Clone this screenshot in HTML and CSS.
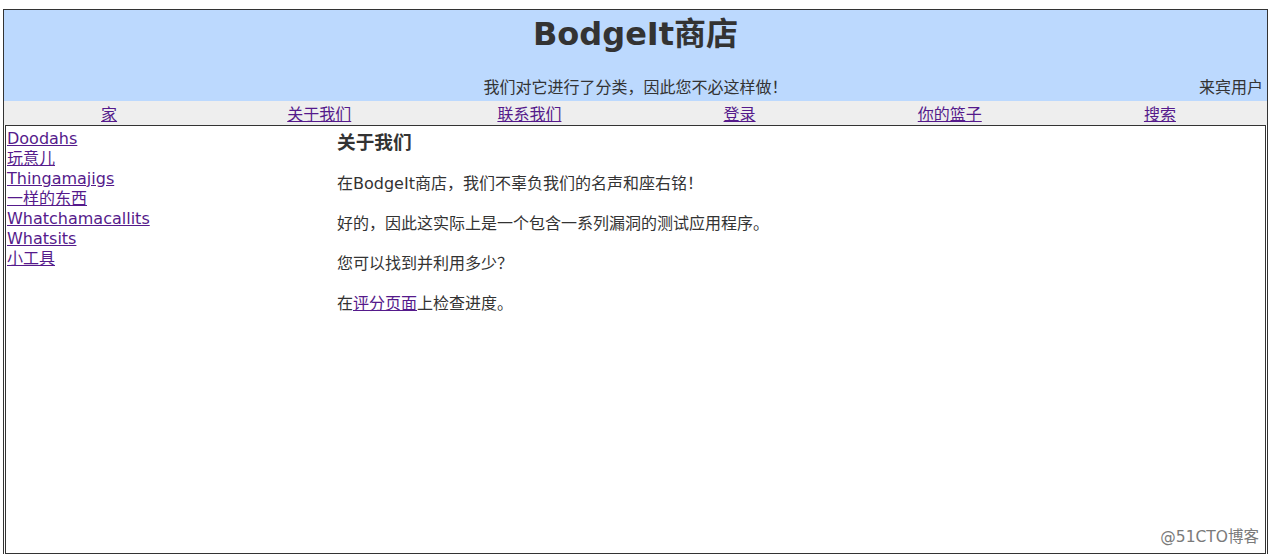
FILE: index.html
```html
<!DOCTYPE html>
<html lang="zh-CN">
<head>
    <meta charset="UTF-8">
    <title>BodgeIt商店</title>
    <link rel="stylesheet" href="styles.css">
</head>
<body>
    <div class="page">
        <div class="header">
            <h1>BodgeIt商店</h1>
            <div class="tagline-row">
                <div class="tagline-side"></div>
                <div class="tagline">我们对它进行了分类，因此您不必这样做！</div>
                <div class="tagline-side user">来宾用户</div>
            </div>
        </div>

        <div class="nav">
            <a href="#">家</a>
            <a href="#">关于我们</a>
            <a href="#">联系我们</a>
            <a href="#">登录</a>
            <a href="#">你的篮子</a>
            <a href="#">搜索</a>
        </div>

        <div class="content">
            <div class="categories">
                <a href="#">Doodahs</a>
                <a href="#">玩意儿</a>
                <a href="#">Thingamajigs</a>
                <a href="#">一样的东西</a>
                <a href="#">Whatchamacallits</a>
                <a href="#">Whatsits</a>
                <a href="#">小工具</a>
            </div>
            <div class="main">
                <h3>关于我们</h3>
                <p>在BodgeIt商店，我们不辜负我们的名声和座右铭！</p>
                <p>好的，因此这实际上是一个包含一系列漏洞的测试应用程序。</p>
                <p>您可以找到并利用多少？</p>
                <p>在<a href="#">评分页面</a>上检查进度。</p>
            </div>
            <div class="watermark">@51CTO博客</div>
        </div>
    </div>
</body>
</html>
```

FILE: styles.css
```css
* {
    box-sizing: border-box;
}

body {
    margin: 9px 0 0 3px;
    font-family: "DejaVu Sans", Verdana, "Noto Sans CJK SC", sans-serif;
    font-size: 16px;
    line-height: 20px;
    color: #333;
    background: #fff;
}

a {
    color: #551a8b;
}

.page {
    border: 1px solid #333;
}

.header {
    background: #bcd9fe;
    padding: 4px 0 3px;
    text-align: center;
}

h1 {
    margin: 0;
    font-size: 32px;
    line-height: 40px;
    font-weight: bold;
}

.tagline-row {
    display: grid;
    grid-template-columns: 30% 40% 30%;
    margin-top: 24px;
}

.tagline {
    text-align: center;
}

.user {
    text-align: right;
    padding-right: 4px;
}

.nav {
    display: grid;
    grid-template-columns: repeat(6, 1fr);
    background: #eeeeee;
    padding: 4px 2px 0 0;
    height: 24px;
    text-align: center;
}

.content {
    position: relative;
    display: grid;
    grid-template-columns: 330px 1fr;
    margin: 0 1px;
    border: 1px solid #333;
    height: 429px;
}

.categories {
    display: flex;
    flex-direction: column;
    align-items: flex-start;
    padding: 3px 1px;
}

.main {
    padding: 3px 1px;
}

h3 {
    margin: 0 0 17px;
    font-size: 18.7px;
    line-height: 28px;
}

p {
    margin: 0 0 20px;
}

.watermark {
    position: absolute;
    right: 6px;
    bottom: 6px;
    font-size: 15.5px;
    color: #7a7a7a;
}
```
